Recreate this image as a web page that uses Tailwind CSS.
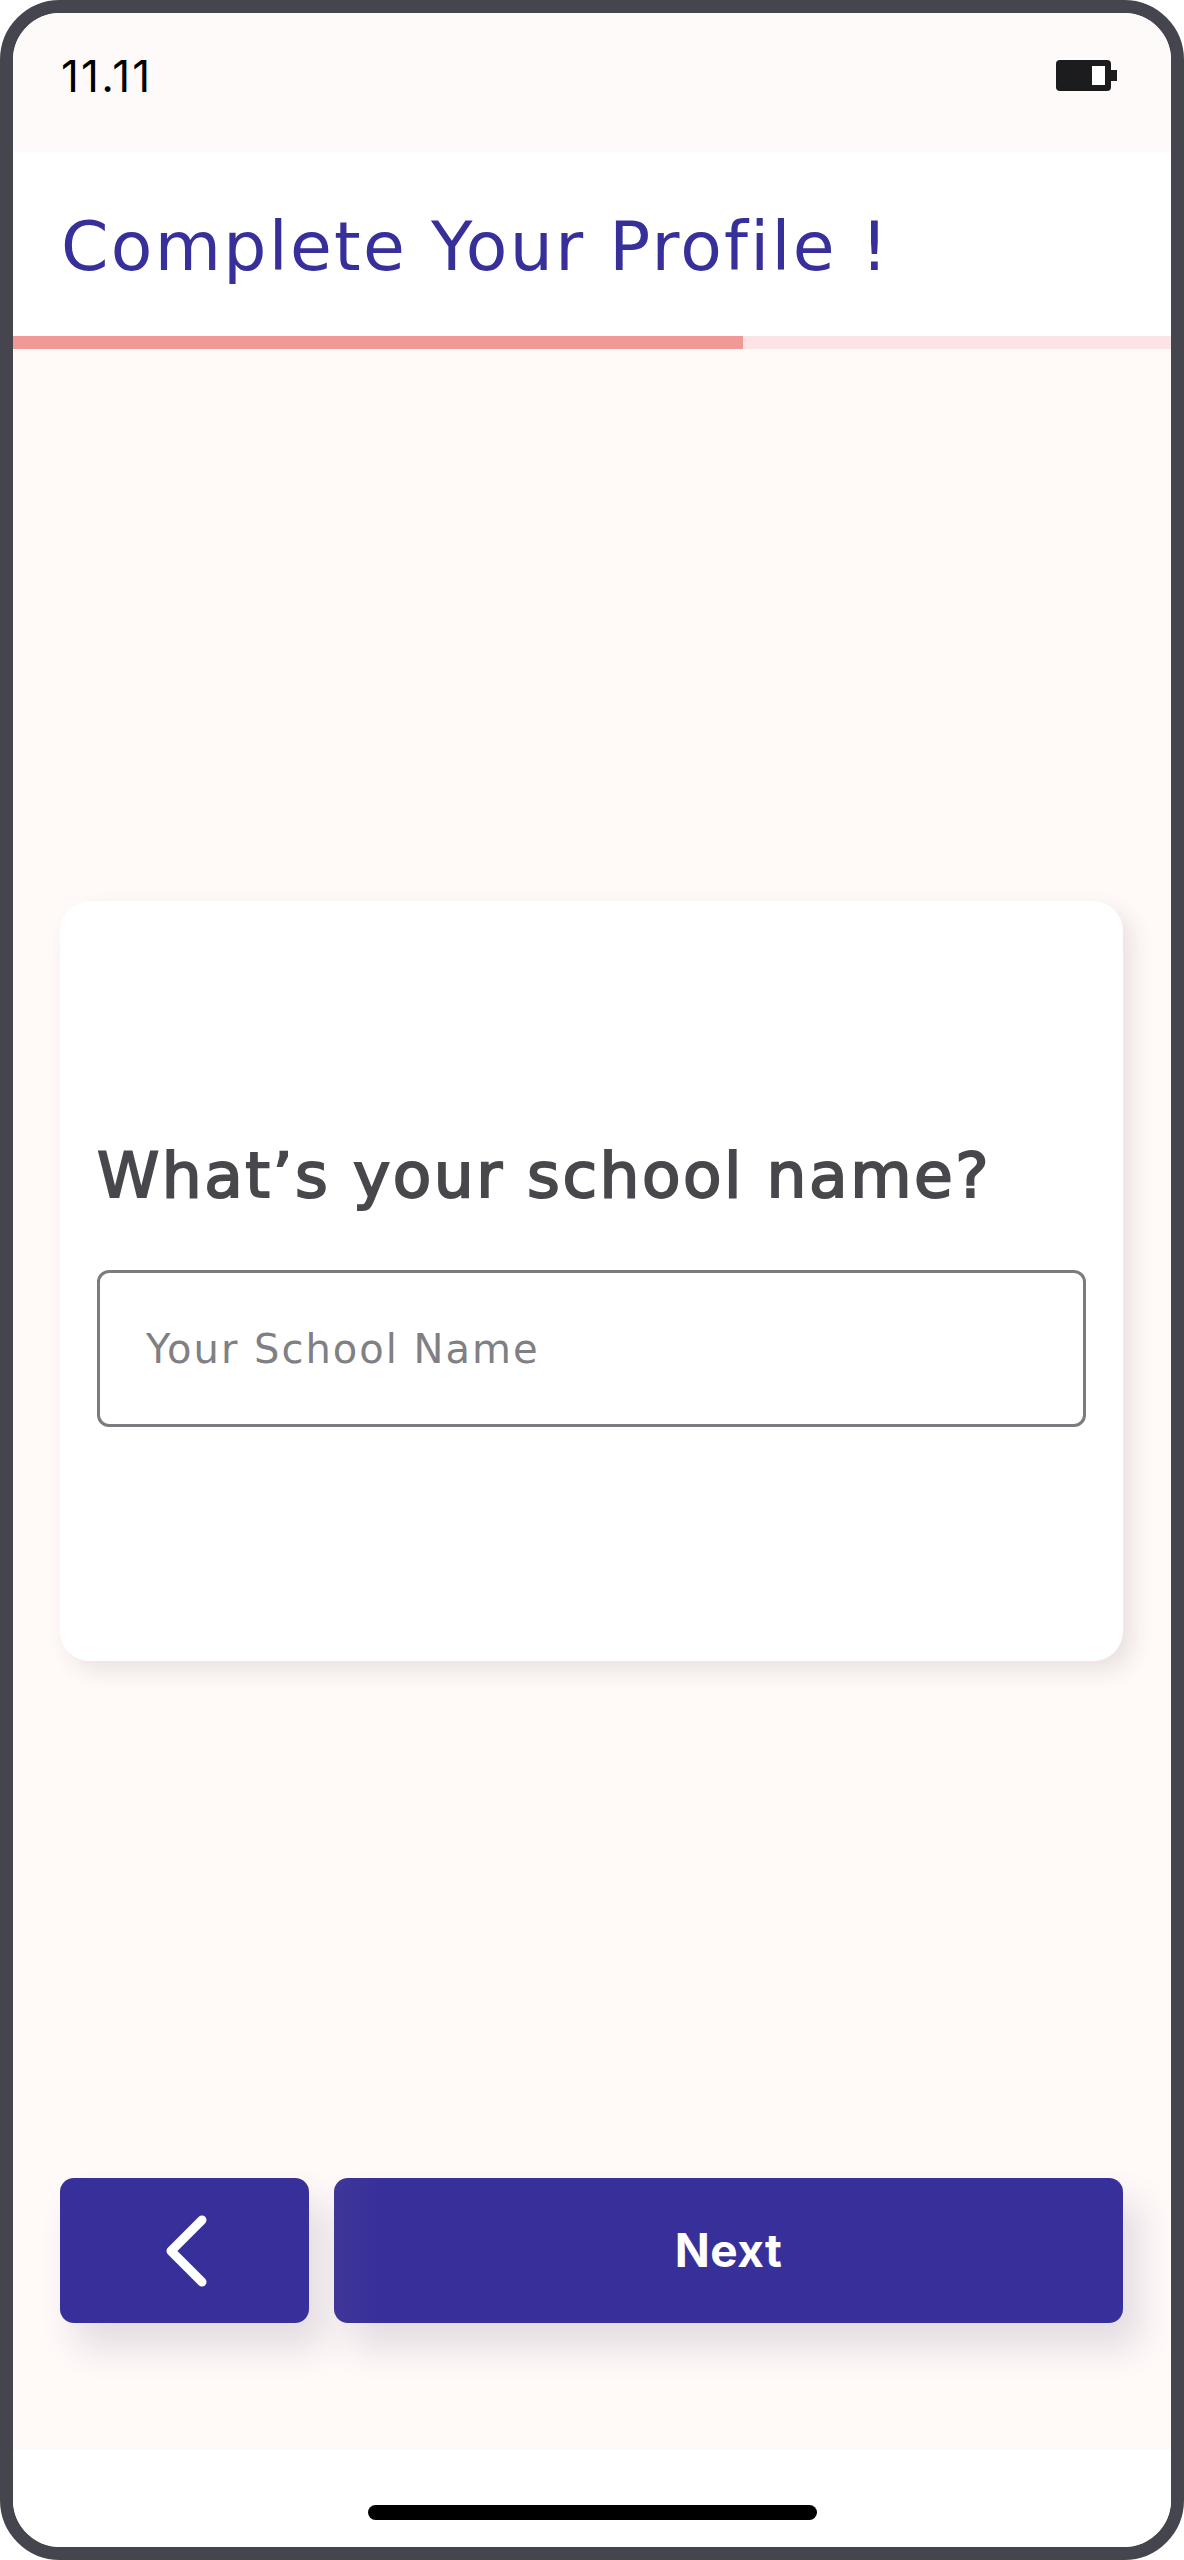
<!doctype html>
<html lang="en">
<head>
<meta charset="utf-8">
<title>Complete Your Profile</title>
<script src="https://cdn.jsdelivr.net/npm/@tailwindcss/browser@4"></script>
</head>
<body class="bg-white font-['DejaVu_Sans',sans-serif]">
<div class="w-[1184px] h-[2560px] border-[13px] border-[#44454d] rounded-[60px] overflow-hidden flex flex-col bg-white">
  <div class="h-[139px] shrink-0 bg-[#fffafa] flex items-start justify-between pl-[48px] pr-[54px] pt-[47px]">
    <span class="font-['Inter',sans-serif] text-[44px] leading-[32px] text-black tracking-[2.2px]">11.11</span>
    <svg width="61" height="31" viewBox="0 0 61 31" aria-hidden="true">
      <rect x="0" y="0" width="55" height="31" rx="4" fill="#1c1c1e"/>
      <rect x="55" y="10" width="6" height="11" fill="#1c1c1e"/>
      <rect x="36" y="6" width="13" height="19" fill="#ffffff"/>
    </svg>
  </div>
  <div class="h-[184px] shrink-0 bg-white flex items-center pl-[48px] pt-[6px]">
    <h1 class="text-[68px] leading-[80px] font-normal text-[#38309a] tracking-[2.3px] whitespace-nowrap">Complete Your Profile !</h1>
  </div>
  <div class="h-[13px] shrink-0 bg-[#fde4e4]">
    <div class="h-full w-[730px] bg-[#f09996]"></div>
  </div>
  <main class="flex-1 bg-[#fff9f8] flex flex-col pl-[47px] pr-[48px] pt-[552px]">
    <div class="h-[760px] shrink-0 bg-white rounded-[30px] shadow-[10px_10px_22px_rgba(60,50,50,0.11)] px-[37px] pt-[240px]">
      <h2 class="text-[63px] leading-[70px] font-normal text-[#48484c] [-webkit-text-stroke:2px_#48484c] tracking-[2.5px] whitespace-nowrap">What’s your school name?</h2>
      <div class="mt-[59px] h-[157px] border-[3px] border-[#7c7c80] rounded-[12px] flex items-center pl-[46px]">
        <span class="text-[40px] leading-[44px] font-normal text-[#808084] tracking-[2px] whitespace-nowrap">Your School Name</span>
      </div>
    </div>
    <div class="mt-[517px] flex gap-[25px] h-[145px] shrink-0">
      <button class="w-[249px] bg-[#38309a] rounded-[14px] flex items-center justify-center shadow-[16px_24px_36px_rgba(50,45,90,0.14)]" aria-label="Back">
        <svg width="48" height="76" viewBox="0 0 48 76" fill="none" stroke="#ffffff" stroke-width="9" stroke-linecap="round" stroke-linejoin="round" aria-hidden="true"><path d="M41 7 L10 38 L41 69"/></svg>
      </button>
      <button class="flex-1 bg-linear-to-r from-[#3f3698] to-[#38309a] to-[6%] rounded-[14px] flex items-center justify-center shadow-[16px_24px_36px_rgba(50,45,90,0.14)] text-white font-['Inter',sans-serif] text-[46px] font-bold tracking-[0.5px]">Next</button>
    </div>
  </main>
  <div class="h-[97px] shrink-0 bg-white flex justify-center pt-[55px]">
    <div class="w-[449px] h-[15px] rounded-full bg-black"></div>
  </div>
</div>
</body>
</html>
